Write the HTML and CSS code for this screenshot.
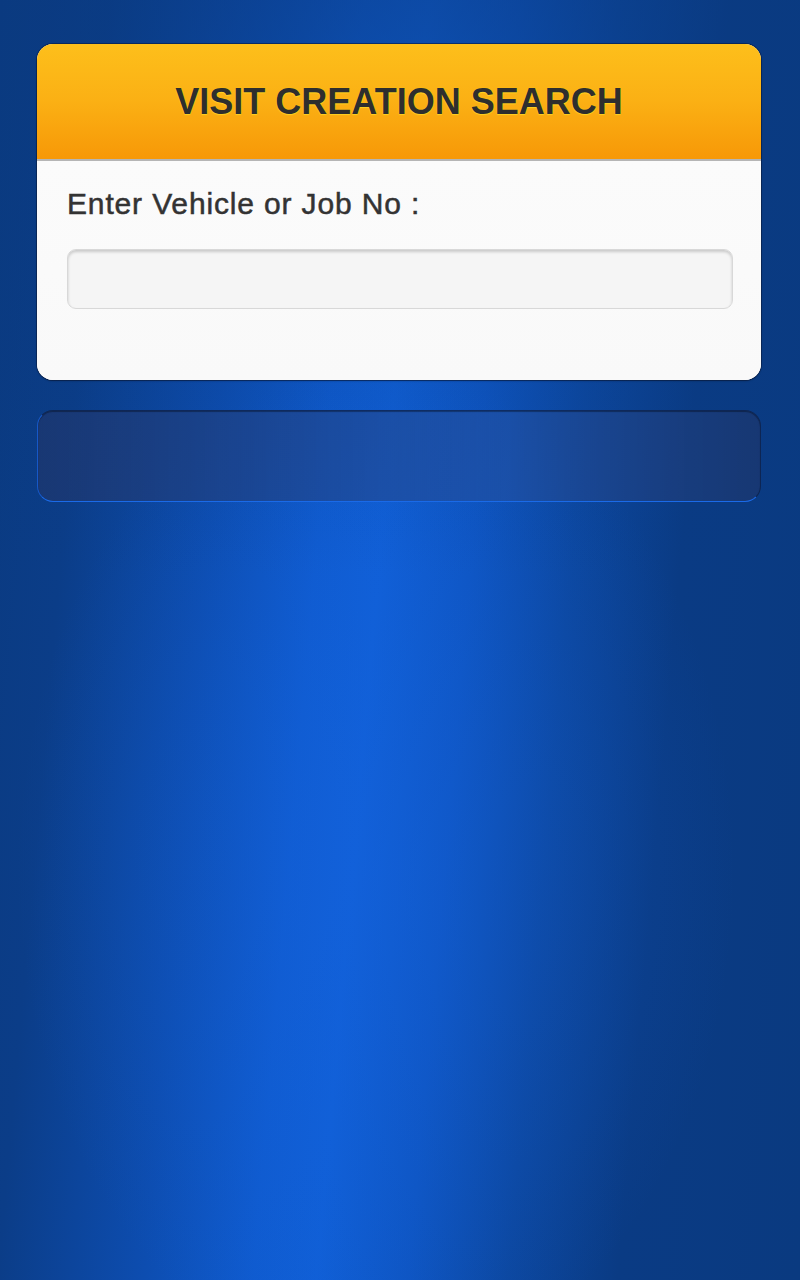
FILE: index.html
```html
<!DOCTYPE html>
<html>
<head>
<meta charset="utf-8">
<link rel="stylesheet" href="styles.css">
</head>
<body>
<div class="page">
  <div class="card">
    <div class="card-header">
      <h1 class="title">VISIT CREATION SEARCH</h1>
    </div>
    <div class="card-body">
      <label class="label" for="q">Enter Vehicle or Job No :</label>
      <input class="field" id="q" type="text">
    </div>
  </div>
  <div class="result"></div>
</div>
</body>
</html>
```

FILE: styles.css
```css
html, body {
  margin: 0;
  padding: 0;
  height: 100%;
}
body {
  font-family: "Liberation Sans", Arial, sans-serif;
  background-color: #0a3a80;
  background-image:
    linear-gradient(to bottom, rgba(10, 58, 128, 0.55) 0%, rgba(10, 58, 128, 0.25) 20%, rgba(10, 58, 128, 0) 45%),
    radial-gradient(ellipse 45% 40% at 47% 68%, rgba(22, 100, 225, 0.35), rgba(22, 100, 225, 0) 100%),
    linear-gradient(95deg, #0a3a80 0%, #0b3d88 12%, #0d4db0 28%, #0f5bcf 40%, #105fd6 47%, #0e55c2 57%, #0c479f 68%, #0a3b84 80%, #0a3a80 100%);
  min-height: 1280px;
}
.page {
  padding: 44px 39px 0 37px;
  display: flex;
  flex-direction: column;
  gap: 30px;
}
.card {
  border-radius: 16px;
  overflow: hidden;
  background: #fafafa;
  box-shadow: 0 0 0 1px rgba(10, 25, 60, 0.55), 0 1px 2px rgba(0, 0, 0, 0.3);
}
.card-header {
  height: 115px;
  background: linear-gradient(to bottom, #fdbf1b 0%, #fbb014 50%, #f79807 100%);
  border-bottom: 2px solid #b5b5b5;
  display: flex;
  align-items: center;
  justify-content: center;
}
.title {
  margin: 0;
  font-size: 36px;
  font-weight: bold;
  color: #2e2e2e;
  text-shadow: 0 0 1px #ffd21a, 0 1px 1px rgba(255, 220, 40, 0.8);
  padding-top: 1px;
}
.card-body {
  padding: 25px 28px 71px 30px;
  display: flex;
  flex-direction: column;
  gap: 27px;
  background: linear-gradient(to bottom, #fbfbfb, #f9f9f9);
}
.label {
  font-size: 30px;
  line-height: 36px;
  color: #333333;
  letter-spacing: 0.85px;
  -webkit-text-stroke: 0.5px #333333;
}
.field {
  height: 60px;
  box-sizing: border-box;
  border: 1px solid #d8d8d8;
  border-radius: 9px;
  background: #f5f5f5;
  box-shadow: inset 0 2px 3px rgba(0, 0, 0, 0.18);
  margin: 0;
  padding: 0 12px;
  font-family: "Liberation Sans", Arial, sans-serif;
  font-size: 24px;
  outline: none;
}
.result {
  height: 92px;
  box-sizing: border-box;
  border-radius: 16px;
  background: linear-gradient(to right, rgba(30, 55, 110, 0.75), rgba(35, 80, 160, 0.6) 65%, rgba(28, 55, 110, 0.75));
  border: 1px solid rgba(10, 30, 70, 0.7);
  border-bottom-color: #1a6ae8;
  border-left-color: #1658c8;
  box-shadow: inset 0 1px 1px rgba(0, 0, 0, 0.35);
}
```
